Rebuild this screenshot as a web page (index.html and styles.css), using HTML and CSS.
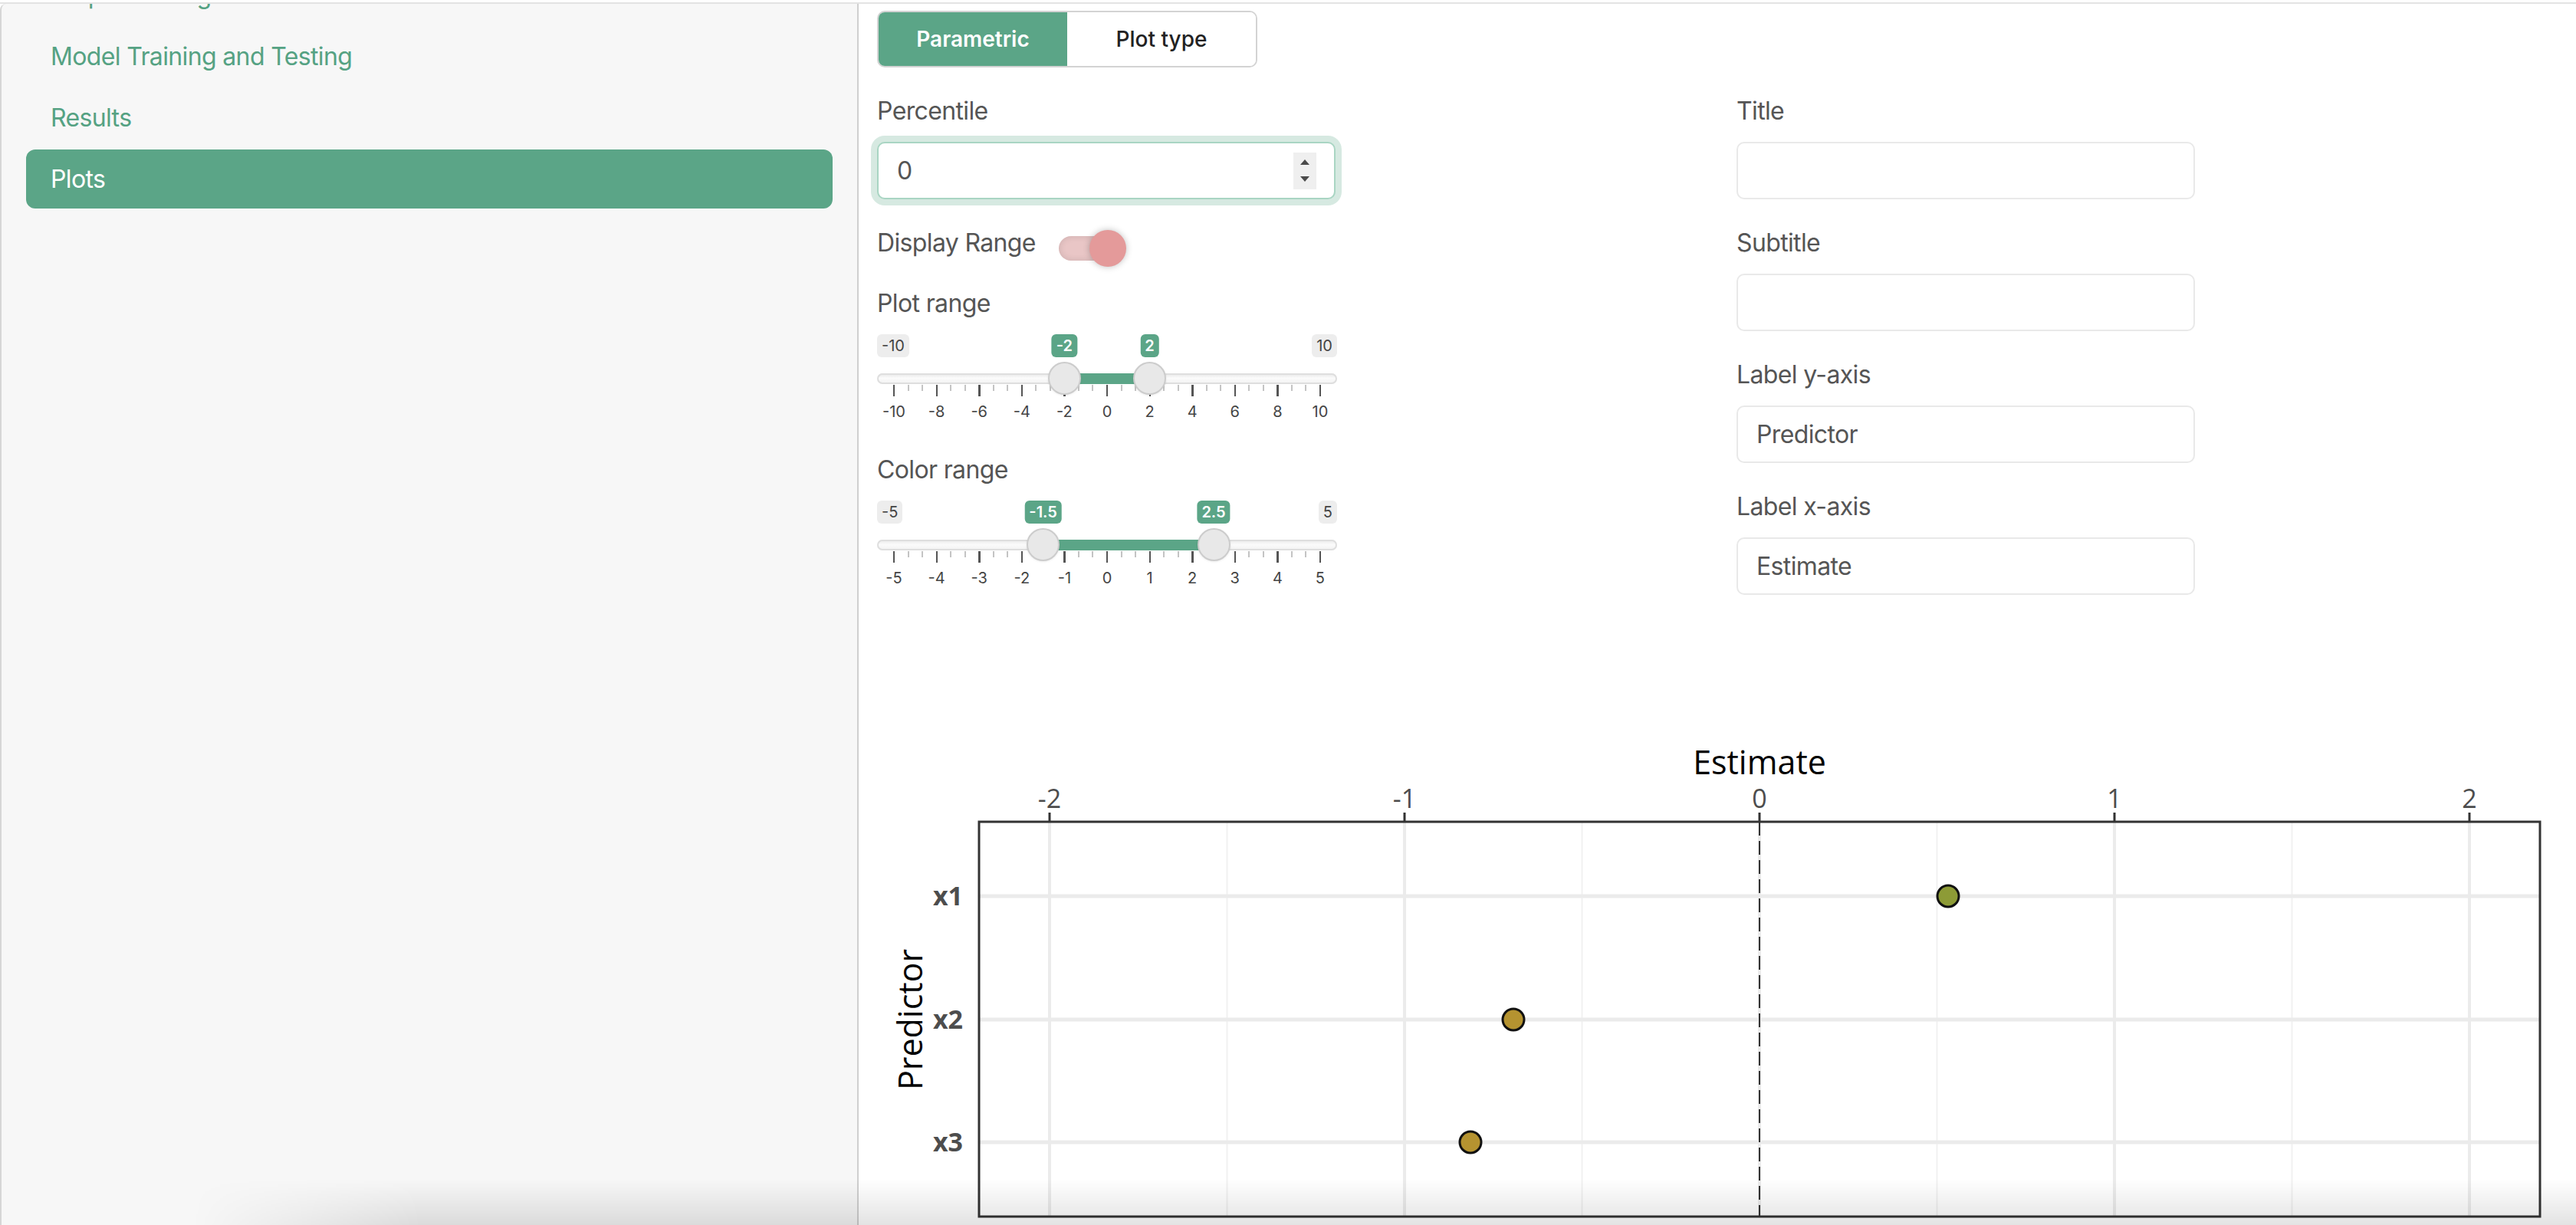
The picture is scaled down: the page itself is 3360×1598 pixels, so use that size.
FILE: index.html
```html
<!DOCTYPE html>
<html lang="en">
<head>
<meta charset="utf-8">
<title>Plots</title>
<link rel="stylesheet" href="styles.css">
</head>
<body>
<div class="topline"></div>
<div class="layout">
  <aside class="sidebar">
    <nav class="nav">
      <a class="nav-link">Preprocessing</a>
      <a class="nav-link">Model Training and Testing</a>
      <a class="nav-link">Results</a>
      <a class="nav-link active">Plots</a>
    </nav>
  </aside>
  <main class="main">
    <div class="btn-group">
      <button class="btn btn-active">Parametric</button>
      <button class="btn">Plot type</button>
    </div>
    <div class="controls">
      <div class="col">
        <div class="form-group">
          <label class="label">Percentile</label>
          <div class="num-input">
            <input class="num-field" type="text" value="0">
            <span class="spinner">
              <svg width="30" height="48" viewBox="0 0 30 48"><polygon points="9,16 21,16 15,9" fill="#4a4a4a"/><polygon points="9,31 21,31 15,38" fill="#4a4a4a"/></svg>
            </span>
          </div>
        </div>
        <div class="switch-row">
          <span class="label-inline">Display Range</span>
          <span class="switch"><span class="knob"></span></span>
        </div>
        <div class="form-group">
          <label class="label">Plot range</label>
          <div class="slider">
            <div class="irs-top">
              <span class="irs-minmax">-10</span>
              <span class="irs-minmax">10</span>
              <span class="irs-value" style="left:244.4px">-2</span>
              <span class="irs-value" style="left:355.6px">2</span>
            </div>
            <div class="irs-track">
              <span class="irs-fill" style="left:244.4px;width:111.2px"></span>
              <span class="irs-handle" style="left:244.4px"></span>
              <span class="irs-handle" style="left:355.6px"></span>
            </div>
            <div class="irs-ticks"></div>
            <div class="irs-nums"><span>-10</span><span>-8</span><span>-6</span><span>-4</span><span>-2</span><span>0</span><span>2</span><span>4</span><span>6</span><span>8</span><span>10</span></div>
          </div>
        </div>
        <div class="form-group">
          <label class="label">Color range</label>
          <div class="slider">
            <div class="irs-top">
              <span class="irs-minmax">-5</span>
              <span class="irs-minmax">5</span>
              <span class="irs-value" style="left:216.6px">-1.5</span>
              <span class="irs-value" style="left:439px">2.5</span>
            </div>
            <div class="irs-track">
              <span class="irs-fill" style="left:216.6px;width:222.4px"></span>
              <span class="irs-handle" style="left:216.6px"></span>
              <span class="irs-handle" style="left:439px"></span>
            </div>
            <div class="irs-ticks"></div>
            <div class="irs-nums"><span>-5</span><span>-4</span><span>-3</span><span>-2</span><span>-1</span><span>0</span><span>1</span><span>2</span><span>3</span><span>4</span><span>5</span></div>
          </div>
        </div>
      </div>
      <div class="col">
        <div class="form-group">
          <label class="label">Title</label>
          <input class="text-input" type="text" value="">
        </div>
        <div class="form-group">
          <label class="label">Subtitle</label>
          <input class="text-input" type="text" value="">
        </div>
        <div class="form-group">
          <label class="label">Label y-axis</label>
          <input class="text-input" type="text" value="Predictor">
        </div>
        <div class="form-group">
          <label class="label">Label x-axis</label>
          <input class="text-input" type="text" value="Estimate">
        </div>
      </div>
    </div>
    <div class="plot">
      <svg class="plot-svg" width="2192" height="658" viewBox="0 0 2192 658">
        <text class="p-title" x="1151" y="69" text-anchor="middle">Estimate</text>
        <g class="p-ticklab" text-anchor="middle">
          <text x="225" y="113">-2</text>
          <text x="688" y="113">-1</text>
          <text x="1151" y="113">0</text>
          <text x="1614" y="113">1</text>
          <text x="2077" y="113">2</text>
        </g>
        <g stroke="#333" stroke-width="3">
          <line x1="225" y1="119" x2="225" y2="131"/>
          <line x1="688" y1="119" x2="688" y2="131"/>
          <line x1="1151" y1="119" x2="1151" y2="131"/>
          <line x1="1614" y1="119" x2="1614" y2="131"/>
          <line x1="2077" y1="119" x2="2077" y2="131"/>
        </g>
        <rect x="133" y="131" width="2036" height="515" fill="#ffffff"/>
        <g stroke="#f1f1f1" stroke-width="2">
          <line x1="456.5" y1="131" x2="456.5" y2="646"/>
          <line x1="919.5" y1="131" x2="919.5" y2="646"/>
          <line x1="1382.5" y1="131" x2="1382.5" y2="646"/>
          <line x1="1845.5" y1="131" x2="1845.5" y2="646"/>
        </g>
        <g stroke="#ebebeb" stroke-width="4">
          <line x1="225" y1="131" x2="225" y2="646"/>
          <line x1="688" y1="131" x2="688" y2="646"/>
          <line x1="1151" y1="131" x2="1151" y2="646"/>
          <line x1="1614" y1="131" x2="1614" y2="646"/>
          <line x1="2077" y1="131" x2="2077" y2="646"/>
        </g>
        <g stroke="#ebebeb" stroke-width="5">
          <line x1="133" y1="228" x2="2169" y2="228"/>
          <line x1="133" y1="389" x2="2169" y2="389"/>
          <line x1="133" y1="549" x2="2169" y2="549"/>
        </g>
        <line x1="1151" y1="131" x2="1151" y2="646" stroke="#333" stroke-width="2" stroke-dasharray="18 7"/>
        <circle cx="1397" cy="228" r="14" fill="#8d9b36" stroke="#111" stroke-width="3"/>
        <circle cx="830" cy="389" r="14" fill="#b59330" stroke="#111" stroke-width="3"/>
        <circle cx="774" cy="549" r="14" fill="#b59330" stroke="#111" stroke-width="3"/>
        <rect x="133" y="131" width="2036" height="515" fill="none" stroke="#333" stroke-width="3"/>
        <g class="p-ylab" text-anchor="end">
          <text x="112" y="240">x1</text>
          <text x="112" y="401">x2</text>
          <text x="112" y="561">x3</text>
        </g>
        <text class="p-title" x="59" y="389" text-anchor="middle" transform="rotate(-90 59 389)">Predictor</text>
      </svg>
    </div>
  </main>
</div>
<div class="bottom-shadow"></div>
</body>
</html>
```
FILE: styles.css
```css
* { box-sizing: border-box; }
html, body {
  margin: 0;
  height: 1598px;
  overflow: hidden;
  background: #ffffff;
}
body {
  padding-top: 3px;
  font-family: Inter, "Noto Sans", "Liberation Sans", sans-serif;
  color: #555555;
}
.topline {
  height: 2px;
  background: #e3e3e3;
}
.layout {
  display: flex;
  height: 1593px;
}
.sidebar {
  width: 1120px;
  flex: none;
  background: #f7f7f7;
  border-left: 2px solid #d6d6d6;
  border-right: 2px solid #cfcfcf;
  border-top-left-radius: 8px;
  padding: 0 32px;
  overflow: hidden;
}
.nav {
  display: flex;
  flex-direction: column;
  gap: 3px;
  margin-top: -50px;
}
.nav-link {
  display: flex;
  align-items: center;
  height: 77px;
  padding-left: 32px;
  font-size: 32px;
  letter-spacing: -0.02em;
  color: #55a283;
  border-radius: 12px;
}
.nav-link.active {
  background: #5ba587;
  color: #ffffff;
}
.main {
  flex: 1;
  padding: 9px 24px 0 24px;
  min-width: 0;
}
.btn-group {
  display: inline-flex;
  border: 2px solid #d3d3d3;
  border-radius: 10px;
  overflow: hidden;
  height: 74px;
}
.btn {
  width: 246px;
  border: 0;
  margin: 0;
  background: #ffffff;
  font-family: Inter, "Noto Sans", "Liberation Sans", sans-serif;
  font-size: 28px;
  font-weight: 500;
  color: #222222;
}
.btn-active {
  background: #5ba587;
  color: #ffffff;
  font-weight: 600;
}
.controls {
  display: grid;
  grid-template-columns: 1121px 1fr;
  margin-top: 33px;
}
.form-group {
  margin-bottom: 33px;
}
.label {
  display: block;
  font-size: 32px;
  letter-spacing: -0.02em;
  line-height: 48px;
  margin-bottom: 16px;
  color: #555555;
}
.text-input {
  display: block;
  width: 598px;
  height: 75px;
  border: 2px solid #e9e9e9;
  border-radius: 10px;
  padding: 0 24px;
  font-family: Inter, "Noto Sans", "Liberation Sans", sans-serif;
  font-size: 32px;
  letter-spacing: -0.02em;
  color: #555555;
  background: #ffffff;
  outline: none;
}
.num-input {
  display: flex;
  align-items: center;
  width: 598px;
  height: 75px;
  border: 2px solid #a9d5c3;
  border-radius: 10px;
  box-shadow: 0 0 0 8px #d6e9e1;
  padding: 0 23px 0 24px;
  background: #ffffff;
}
.num-field {
  flex: 1;
  min-width: 0;
  border: 0;
  outline: none;
  padding: 0;
  font-family: Inter, "Noto Sans", "Liberation Sans", sans-serif;
  font-size: 32px;
  color: #555555;
  background: transparent;
}
.spinner {
  display: block;
  width: 30px;
  height: 48px;
  background: #efefef;
}
.spinner svg { display: block; }
.switch-row {
  display: flex;
  align-items: flex-start;
  height: 48px;
  margin-bottom: 31px;
}
.label-inline {
  font-size: 32px;
  letter-spacing: -0.02em;
  line-height: 48px;
  color: #555555;
}
.switch {
  position: relative;
  display: block;
  width: 80px;
  height: 32px;
  margin-top: 15px;
  margin-left: 30px;
  border-radius: 16px;
  background: #e9c6c6;
  box-shadow: inset 0 0 10px rgba(0, 0, 0, 0.12);
}
.knob {
  position: absolute;
  top: -8px;
  left: 40px;
  width: 48px;
  height: 48px;
  border-radius: 50%;
  background: #e49a9a;
  box-shadow: 0 0 8px rgba(0, 0, 0, 0.25);
}
.slider {
  width: 600px;
  height: 120px;
}
.irs-top {
  position: relative;
  display: flex;
  justify-content: space-between;
  height: 30px;
}
.irs-minmax {
  display: block;
  height: 30px;
  line-height: 30px;
  padding: 0 6px;
  border-radius: 6px;
  background: #ededed;
  font-size: 20px;
  color: #444444;
}
.irs-value {
  position: absolute;
  top: 0;
  height: 30px;
  line-height: 30px;
  padding: 0 6px;
  border-radius: 6px;
  background: #5ba587;
  color: #ffffff;
  font-size: 20px;
  font-weight: 600;
  transform: translateX(-50%);
  white-space: nowrap;
}
.irs-track {
  position: relative;
  margin-top: 21px;
  height: 14px;
  border-radius: 8px;
  background: linear-gradient(to bottom, #e6e6e6, #fbfbfb 45%, #f1f1f1);
  box-shadow: inset 0 0 0 2px #dedede;
}
.irs-fill {
  position: absolute;
  top: 0;
  height: 14px;
  background: #5ba587;
}
.irs-handle {
  position: absolute;
  top: -15px;
  width: 43px;
  height: 43px;
  margin-left: -21.5px;
  border-radius: 50%;
  background: #e8e8e8;
  border: 2px solid #cccccc;
  box-shadow: 0 1px 3px rgba(0, 0, 0, 0.08);
}
.irs-ticks {
  margin-top: 1px;
  margin-left: 21px;
  width: 559px;
  height: 15px;
  background:
    repeating-linear-gradient(to right, #555555 0 2.4px, transparent 2.4px 55.6px) 0 0 / 100% 15px no-repeat,
    repeating-linear-gradient(to right, #c4c4c4 0 2px, transparent 2px 18.5333px) 0 0 / 100% 8px no-repeat;
}
.irs-nums {
  display: flex;
  margin-top: 8px;
  margin-left: -5.8px;
  width: 611.6px;
  height: 24px;
  line-height: 24px;
  font-size: 20px;
  color: #444444;
}
.irs-nums span {
  flex: 1;
  text-align: center;
}
.plot {
  margin-top: 132px;
}
.plot-svg {
  display: block;
}
.p-title {
  font-family: "Open Sans", "Noto Sans", sans-serif;
  font-size: 43px;
  fill: #000000;
}
.p-ticklab {
  font-family: "Open Sans", "Noto Sans", sans-serif;
  font-size: 34px;
  fill: #4d4d4d;
}
.p-ylab {
  font-family: "Open Sans", "Noto Sans", sans-serif;
  font-size: 34px;
  font-weight: 700;
  fill: #4d4d4d;
}
.bottom-shadow {
  position: fixed;
  left: 250px;
  right: 0;
  bottom: 0;
  height: 60px;
  pointer-events: none;
  background: linear-gradient(to bottom, rgba(0, 0, 0, 0), rgba(0, 0, 0, 0.11));
  -webkit-mask-image: linear-gradient(to right, transparent, #000 300px);
  mask-image: linear-gradient(to right, transparent, #000 300px);
}
```
